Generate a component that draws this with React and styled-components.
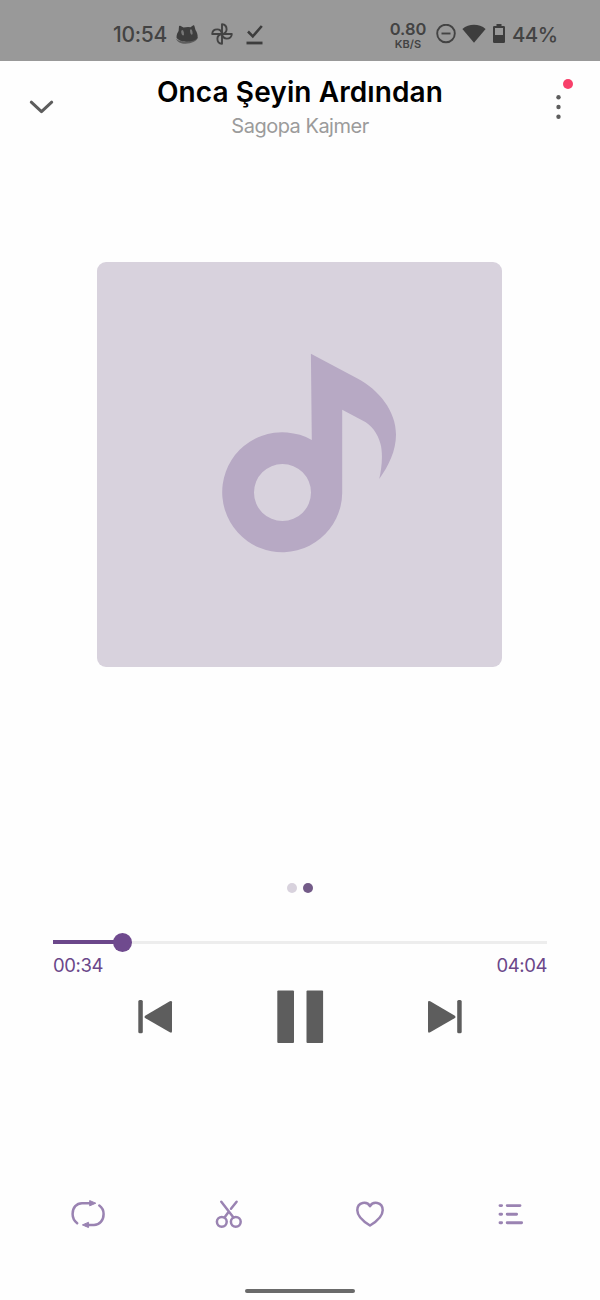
import styled, { createGlobalStyle } from "styled-components";

const song = {
    title: "Onca Şeyin Ardından",
    artist: "Sagopa Kajmer",
    elapsed: "00:34",
    duration: "04:04",
    progress: 14,
};

export default function App(){
    return (
        <Screen>
            <GlobalStyle />
            <StatusBar />
            <Header />
            <Cover>
                <NoteIcon />
            </Cover>
            <Pages>
                <PageDot />
                <PageDot $active />
            </Pages>
            <SeekBar />
            <Controls />
            <Actions />
            <HomeIndicator />
        </Screen>
    )
}

function StatusBar(){
    return (
        <StatusContainer>
            <StatusGroup>
                <Clock>10:54</Clock>
                <svg width="24" height="22" viewBox="0 0 24 22">
                    <path d="M1 15.500C4 20 18 19.500 23 13.500C23.500 20.500 3.500 24.500 1 15.500Z" fill="#5d5d5d" />
                    <path d="M1.500 14.500C1.500 11 3 9 3.600 8L4 3.300Q4.300 2.300 5.200 2.800L8.500 4.500Q12 3.900 15.500 4.200L18.300 2.300Q19.200 1.900 19.400 3L20.500 7C22 9 23 12.500 22.500 14.500C21 19.500 4 20.500 1.500 14.500Z" fill="#3d3d3d" />
                    <ellipse cx="7.600" cy="9.700" rx="1.300" ry="2.800" fill="#777777" transform="rotate(-12 7.600 9.700)" />
                    <ellipse cx="16.300" cy="9" rx="1.200" ry="2.700" fill="#777777" transform="rotate(-12 16.300 9)" />
                </svg>
                <svg width="24" height="24" viewBox="0 0 24 24" fill="none" stroke="#434343" strokeWidth="1.900" strokeLinejoin="round">
                    {[0, 90, 180, 270].map(angle => (
                        <path key={angle} d="M12 12V2.200C14.800 2.400 16.600 4.500 16.600 7.200S15 11.500 12 12Z" transform={`rotate(${angle} 12 12)`} />
                    ))}
                </svg>
                <svg width="20" height="22" viewBox="0 0 20 22" fill="none" stroke="#3d3d3d">
                    <path d="M3 8.500L7.800 13.300L16.800 3" strokeWidth="2.600" />
                    <path d="M1.500 20H17.500" strokeWidth="2.800" />
                </svg>
            </StatusGroup>
            <StatusGroup $right>
                <NetSpeed>
                    <strong>0.80</strong>
                    <span>KB/S</span>
                </NetSpeed>
                <svg width="20" height="20" viewBox="0 0 20 20" fill="none" stroke="#434343" strokeWidth="1.900">
                    <circle cx="10" cy="9.500" r="8.800" />
                    <path d="M5.500 9.500H14.500" />
                </svg>
                <svg width="24" height="20" viewBox="0 0 24 20">
                    <path d="M12 18.700L.4 4.900C7-.5 17-.5 23.600 4.900Z" fill="#3d3d3d" />
                </svg>
                <svg width="14" height="20" viewBox="0 0 14 20" fill="#3d3d3d">
                    <path fillRule="evenodd" d="M4.500 -.2H9.500V2H11.700Q13 2 13 3.300V17.700Q13 19 11.700 19H2.300Q1 19 1 17.700V3.300Q1 2 2.300 2H4.500ZM3 4V11H11V4Z" />
                </svg>
                <Battery>44%</Battery>
            </StatusGroup>
        </StatusContainer>
    )
}

function Header(){
    return (
        <HeaderContainer>
            <IconButton aria-label="close">
                <svg width="26" height="16" viewBox="0 0 26 16" fill="none" stroke="#5d5d5d" strokeWidth="3" strokeLinecap="round" strokeLinejoin="round">
                    <path d="M2.300 3.200L12.500 12.700L22.700 3.200" />
                </svg>
            </IconButton>
            <SongInfo>
                <Title>{song.title}</Title>
                <Artist>{song.artist}</Artist>
            </SongInfo>
            <IconButton aria-label="more">
                <svg width="6" height="26" viewBox="0 0 6 26" fill="#5d5d5d">
                    <circle cx="3.500" cy="3.200" r="2.200" />
                    <circle cx="3.500" cy="13" r="2.200" />
                    <circle cx="3.500" cy="22.700" r="2.200" />
                </svg>
                <Badge />
            </IconButton>
        </HeaderContainer>
    )
}

function NoteIcon(){
    return (
        <svg width="176" height="202" viewBox="221 352 176 202">
            <path
                fill="#b7a9c4"
                fillRule="evenodd"
                d="M310.900 353.700L357 378.200C379 389.700 396 411 396 434.500C396 451 388.500 466 379.200 479C382 468 383 453 380.500 444C377.500 433 371.500 425 362.500 420.500L342.200 409.700V493A60 60 0 1 1 311.800 440ZM282.500 464A28.500 28.500 0 1 0 282.500 521A28.500 28.500 0 1 0 282.500 464Z"
            />
        </svg>
    )
}

function SeekBar(){
    return (
        <SeekContainer>
            <Track>
                <Played style={{ width: `${song.progress}%` }} />
                <Thumb />
            </Track>
            <Times>
                <p>{song.elapsed}</p>
                <p>{song.duration}</p>
            </Times>
        </SeekContainer>
    )
}

function Controls(){
    return (
        <ControlsContainer>
            <ControlButton aria-label="previous">
                <SkipIcon />
            </ControlButton>
            <ControlButton aria-label="pause">
                <svg width="48" height="54" viewBox="0 0 48 54" fill="#5d5d5d">
                    <rect x="1.300" y=".6" width="16.700" height="52.300" rx="1" />
                    <rect x="30.500" y=".6" width="16.600" height="52.300" rx="1" />
                </svg>
            </ControlButton>
            <ControlButton aria-label="next" $flip>
                <SkipIcon />
            </ControlButton>
        </ControlsContainer>
    )
}

function SkipIcon(){
    return (
        <svg width="36" height="36" viewBox="0 0 36 36" fill="#5d5d5d">
            <rect x="1.300" y="1" width="4.500" height="33.300" rx="1.500" />
            <path d="M8.500 16.600L32.800 2.300Q35 1.300 35 3.300V32.300Q35 34.500 32.800 33.300L8.500 19.200Q6.500 17.900 8.500 16.600Z" />
        </svg>
    )
}

function Actions(){
    return (
        <ActionsContainer>
            <ActionButton aria-label="repeat">
                <svg width="36" height="32" viewBox="0 0 36 32">
                    <path d="M7.200 25.200C4.300 23 2.600 19.700 2.600 16C2.600 9.500 6.500 5.200 12 5.200H20M29.300 7.500C32.100 9.500 33.600 12.500 33.600 16C33.600 22.500 29.500 26.900 24 26.900H16" />
                    <path d="M20 2.700L25.800 5.200L20 7.700ZM18.200 24.400L12.400 26.900L18.200 29.400Z" fill="#9a83b2" strokeWidth="1" />
                </svg>
            </ActionButton>
            <ActionButton aria-label="cut">
                <svg width="28" height="30" viewBox="0 0 28 30">
                    <path d="M6.300 2.700L18.500 18.500M21.600 2.700L16 9.800M13.700 12.800L9.500 18.500" />
                    <circle cx="6.800" cy="22.800" r="4.900" />
                    <circle cx="20.800" cy="22.800" r="4.900" />
                </svg>
            </ActionButton>
            <ActionButton aria-label="favorite">
                <svg width="30" height="28" viewBox="0 0 30 28">
                    <path d="M15 6.200C12.500 1.200 2.300 1.100 2.300 10.300C2.300 16.500 8.300 21.500 15 25.500C21.700 21.500 27.700 16.500 27.700 10.300C27.700 1.100 17.500 1.200 15 6.200Z" />
                </svg>
            </ActionButton>
            <ActionButton aria-label="queue">
                <svg width="28" height="24" viewBox="0 0 28 24">
                    <path d="M3 3.600H4.600M10.200 3.600H23M3 12.200H4.600M10.200 12.200H19.600M3 20.800H4.600M10.200 20.800H24.600" strokeWidth="2.900" />
                </svg>
            </ActionButton>
        </ActionsContainer>
    )
}

const GlobalStyle = createGlobalStyle`
* {
    box-sizing: border-box;
}
body {
    margin: 0;
    background-color: #fefefe;
    font-family: Inter, "Liberation Sans", sans-serif;
}
p, h1, h2 {
    margin: 0;
}
svg {
    display: block;
    flex-shrink: 0;
}
button {
    border: none;
    background: none;
    padding: 0;
}
`

const Screen = styled.div`
width: 600px;
height: 1300px;
display: flex;
flex-direction: column;
align-items: center;
overflow: hidden;
`

const StatusContainer = styled.div`
width: 100%;
height: 61px;
flex-shrink: 0;
background-color: #999999;
color: #434343;
display: flex;
justify-content: space-between;
padding: 7px 43px 0 113px;
`
const StatusGroup = styled.div`
display: flex;
align-items: center;
gap: ${props => props.$right ? "6px" : "11px"};
`
const Clock = styled.p`
width: 51px;
font-size: 21px;
font-weight: 500;
letter-spacing: -0.3px;
white-space: nowrap;
`
const NetSpeed = styled.div`
width: 38px;
margin-right: 3px;
padding-top: 4px;
display: flex;
flex-direction: column;
align-items: center;
strong{
    font-size: 16.500px;
    line-height: 17px;
    font-weight: 600;
}
span{
    font-size: 11px;
    line-height: 13px;
    font-weight: 600;
}
`
const Battery = styled.p`
width: 45px;
font-size: 20.500px;
font-weight: 500;
letter-spacing: -0.6px;
white-space: nowrap;
`

const HeaderContainer = styled.div`
width: 100%;
height: 91px;
flex-shrink: 0;
display: flex;
justify-content: space-between;
align-items: center;
padding: 0 22px;
`
const IconButton = styled.button`
position: relative;
width: 40px;
height: 40px;
display: flex;
align-items: center;
justify-content: center;
`
const Badge = styled.span`
position: absolute;
top: -7.500px;
right: 5.500px;
width: 10px;
height: 10px;
border-radius: 50%;
background-color: #f8406a;
`
const SongInfo = styled.div`
display: flex;
flex-direction: column;
align-items: center;
align-self: flex-start;
padding-top: 14px;
white-space: nowrap;
`
const Title = styled.h1`
color: #000000;
font-size: 28px;
line-height: 34px;
font-weight: 600;
letter-spacing: 0.1px;
`
const Artist = styled.h2`
color: #9b9b9b;
font-size: 20px;
line-height: 24px;
font-weight: 400;
letter-spacing: -0.500px;
margin-top: 5px;
`

const Cover = styled.div`
width: 405px;
height: 405px;
flex-shrink: 0;
margin-top: 110px;
margin-right: 1px;
border-radius: 9px;
background-color: #d8d2dd;
display: flex;
justify-content: center;
padding: 90px 0 0 19px;
`

const Pages = styled.div`
display: flex;
gap: 6px;
margin-top: 215.500px;
`
const PageDot = styled.span`
width: 10px;
height: 10px;
border-radius: 50%;
background-color: ${props => props.$active ? "#735b88" : "#d8d2dd"};
`

const SeekContainer = styled.div`
width: 494px;
margin-top: 40.500px;
`
const Track = styled.div`
height: 18px;
display: flex;
align-items: center;
background: linear-gradient(#ededed, #ededed) center / 100% 3px no-repeat;
`
const Played = styled.div`
height: 4px;
background-color: #6b478a;
`
const Thumb = styled.span`
width: 19px;
height: 19px;
margin-left: -9px;
border-radius: 50%;
background-color: #6f4a8e;
`
const Times = styled.div`
display: flex;
justify-content: space-between;
margin-top: 2px;
color: #6b478a;
font-size: 18.500px;
line-height: 24px;
letter-spacing: -0.400px;
`

const ControlsContainer = styled.div`
width: 326px;
display: flex;
align-items: center;
justify-content: space-between;
margin-top: 13px;
`
const ControlButton = styled.button`
transform: ${props => props.$flip ? "scaleX(-1)" : "none"};
`

const ActionsContainer = styled.div`
width: 564px;
display: grid;
grid-template-columns: repeat(4, 1fr);
margin-top: 150px;
margin-right: 1px;
`
const ActionButton = styled.button`
height: 40px;
display: flex;
align-items: center;
justify-content: center;
svg{
    fill: none;
    stroke: #9a83b2;
    stroke-width: 2.500px;
    stroke-linecap: round;
    stroke-linejoin: round;
}
`

const HomeIndicator = styled.div`
width: 110px;
height: 4px;
margin-top: 55px;
border-radius: 2px;
background-color: #6a6a6a;
`
